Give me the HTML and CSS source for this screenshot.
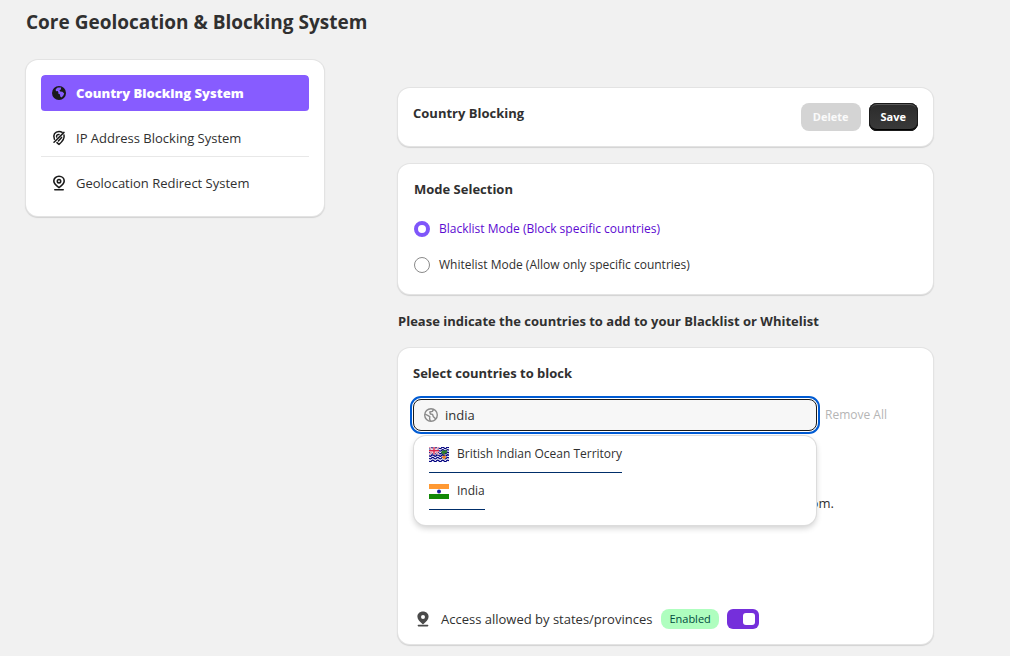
FILE: index.html
```html
<!DOCTYPE html>
<html lang="en">
<head>
    <meta charset="UTF-8">
    <meta name="viewport" content="width=device-width, initial-scale=1.0">
    <title>Core Geolocation &amp; Blocking System</title>
    <link rel="stylesheet" href="styles.css">
</head>
<body>
    <header>
        <h1>Core Geolocation &amp; Blocking System</h1>
    </header>
    <div class="layout">
        <nav class="card sidebar">
            <a class="nav-item active" href="#country">
                <svg class="icon" viewBox="0 0 16 16">
                    <circle cx="8" cy="8" r="7" fill="#1a1a1a"/>
                    <path d="M10.2 2.6 C8.8 2.4 7.6 2.4 6.2 2.8 L4.6 4.4 L5 6.2 L6.6 6 L7.4 7.2 L7.2 8.6 L9 9.4 L9.2 11.6 L10.6 12.4 L12.4 10.6 L13.2 8.4 L11.4 6.8 L9.2 6.6 L8.4 5.4 L9.8 4.4 Z" fill="#875cff"/>
                </svg>
                Country Blocking System
            </a>
            <a class="nav-item" href="#ip">
                <svg class="icon" viewBox="0 0 16 16" fill="none" stroke="#1a1a1a" stroke-width="1.5" stroke-linecap="round">
                    <path d="M3.4 9.2 C1.6 5 4 1.4 8 1.4 C9.2 1.4 10.4 1.8 11.2 2.4"/>
                    <path d="M13 5 C14 9 10.6 12.2 8 14.4 C7.2 13.8 6.6 13.2 6 12.6"/>
                    <path d="M3 12.2 L13 2.4"/>
                    <path d="M5.6 7 C5.4 5.4 6.4 4.4 8 4.4"/>
                    <path d="M7.4 11 L10.6 7.4"/>
                </svg>
                IP Address Blocking System
            </a>
            <a class="nav-item" href="#redirect">
                <svg class="icon" viewBox="0 0 16 16" fill="none" stroke="#1a1a1a" stroke-width="1.6" stroke-linecap="round">
                    <path d="M8 12.6 C5 10.4 2.8 8.6 2.8 6 C2.8 3.2 5.2 1.2 8 1.2 C10.8 1.2 13.2 3.2 13.2 6 C13.2 8.6 11 10.4 8 12.6 Z"/>
                    <circle cx="8" cy="6.2" r="1.7"/>
                    <path d="M3.8 14.8 H12.2"/>
                </svg>
                Geolocation Redirect System
            </a>
        </nav>

        <main>
            <section class="card title-card" id="country">
                <h2>Country Blocking</h2>
                <div class="actions">
                    <button class="btn" type="button" disabled>Delete</button>
                    <button class="btn btn-primary" type="button">Save</button>
                </div>
            </section>

            <section class="card mode-card">
                <h2>Mode Selection</h2>
                <label class="mode">
                    <input type="radio" name="mode" value="blacklist" checked>
                    <span>Blacklist Mode (Block specific countries)</span>
                </label>
                <label class="mode">
                    <input type="radio" name="mode" value="whitelist">
                    <span>Whitelist Mode (Allow only specific countries)</span>
                </label>
            </section>

            <h2 class="hint">Please indicate the countries to add to your Blacklist or Whitelist</h2>

            <section class="card select-card">
                <h2><label for="country-search">Select countries to block</label></h2>
                <div class="search-row">
                    <div class="search">
                        <div class="search-box">
                            <svg class="search-icon" viewBox="0 0 16 16" fill="none" stroke="#8a8a8a" stroke-width="1.4" stroke-linejoin="round">
                                <circle cx="8" cy="8" r="6.3"/>
                                <path d="M2 7 L4.6 8.4 L6.8 9.6 L6.6 12 L7.4 14"/>
                                <path d="M10.6 2.4 L9.4 4.4 L6.8 5 L7.4 7 L9.6 7.4 L10.2 9.4 L12.8 12"/>
                            </svg>
                            <input type="text" id="country-search" value="india" autocomplete="off">
                        </div>
                        <div class="dropdown">
                            <a class="option" href="#io">
                                <svg class="flag" viewBox="0 0 20 15">
                                    <rect width="20" height="15" fill="#fff"/>
                                    <path d="M0 8.5 q1.25 1.5 2.5 0 t2.5 0 t2.5 0 t2.5 0 t2.5 0 t2.5 0 t2.5 0 t2.5 0 M0 11.2 q1.25 1.5 2.5 0 t2.5 0 t2.5 0 t2.5 0 t2.5 0 t2.5 0 t2.5 0 t2.5 0 M0 13.9 q1.25 1.5 2.5 0 t2.5 0 t2.5 0 t2.5 0 t2.5 0 t2.5 0 t2.5 0 t2.5 0 M10 .8 q1.25 1.5 2.5 0 t2.5 0 t2.5 0 t2.5 0 M10 3.4 q1.25 1.5 2.5 0 t2.5 0 t2.5 0 t2.5 0 M10 6 q1.25 1.5 2.5 0 t2.5 0 t2.5 0 t2.5 0" fill="none" stroke="#000080" stroke-width="1.3"/>
                                    <rect width="10" height="7.5" fill="#2a2a86"/>
                                    <path d="M0 0 L10 7.5 M10 0 L0 7.5" stroke="#fff" stroke-width="1.6"/>
                                    <path d="M0 0 L10 7.5 M10 0 L0 7.5" stroke="#d8254a" stroke-width=".6"/>
                                    <path d="M5 0 V7.5 M0 3.75 H10" stroke="#fff" stroke-width="2.4"/>
                                    <path d="M5 0 V7.5 M0 3.75 H10" stroke="#d8254a" stroke-width="1.4"/>
                                    <path d="M15.2 5 V11" stroke="#8a6a28" stroke-width="1"/>
                                    <path d="M12 5.5 L13.5 3 L15.2 4 L17.4 2.5 L18.2 6 L16 6.5 L14 7.5 Z" fill="#2e7d32"/>
                                    <path d="M13.3 9 H17 V10.4 L15.2 12.4 L13.3 10.4 Z" fill="#ffa726"/>
                                    <path d="M14.2 10 H16.2" stroke="#d8254a" stroke-width=".9"/>
                                </svg>
                                British Indian Ocean Territory
                            </a>
                            <a class="option" href="#in">
                                <svg class="flag" viewBox="0 0 20 15">
                                    <rect width="20" height="15" fill="#fff"/>
                                    <rect width="20" height="5" fill="#ff9933"/>
                                    <rect y="10" width="20" height="5" fill="#128807"/>
                                    <circle cx="10" cy="7.5" r="2" fill="#1a1a9c"/>
                                </svg>
                                India
                            </a>
                        </div>
                    </div>
                    <button class="remove-all" type="button" disabled>Remove All</button>
                </div>
                <p class="empty-note">The countries you have selected appear at the bottom.</p>
                <div class="access-row">
                    <svg class="icon" viewBox="0 0 16 16">
                        <path fill-rule="evenodd" d="M8 .6 C4.8 .6 2.4 2.8 2.4 5.8 C2.4 8.8 5 11 8 13.4 C11 11 13.6 8.8 13.6 5.8 C13.6 2.8 11.2 .6 8 .6 Z M8 4 A2 2 0 1 1 8 8 A2 2 0 1 1 8 4 Z" fill="#4a4a4a"/>
                        <path d="M3.4 14.6 H12.6" stroke="#4a4a4a" stroke-width="1.6" stroke-linecap="round"/>
                    </svg>
                    <label for="states">Access allowed by states/provinces</label>
                    <span class="badge">Enabled</span>
                    <input class="switch" type="checkbox" id="states" checked>
                </div>
            </section>
        </main>
    </div>
</body>
</html>
```

FILE: styles.css
```css
* {
    box-sizing: border-box;
}
body {
    margin: 0;
    padding: 8px 77px 12px 26px;
    background: #f1f1f1;
    color: #303030;
    font-family: "Segoe UI", "Open Sans", "Noto Sans", sans-serif;
    font-size: 13px;
    line-height: 20px;
}
h1, h2, p {
    margin: 0;
}
h1 {
    font-size: 19px;
    line-height: 28px;
    font-weight: 700;
}
h2 {
    font-size: 13px;
    line-height: 20px;
    font-weight: 700;
}
a {
    color: inherit;
    text-decoration: none;
}
.layout {
    display: grid;
    grid-template-columns: 298px minmax(0, 1fr);
    column-gap: 74px;
    align-items: start;
    margin-top: 24px;
}
.card {
    background: #fff;
    border-radius: 12px;
    box-shadow: 0 0 0 1px #e3e3e3, 0 1px 1px 1px #d2d2d2;
}
.icon {
    flex: none;
    width: 16px;
    height: 16px;
}

/* Sidebar */
.sidebar {
    display: flex;
    flex-direction: column;
    gap: 8px;
    padding: 15px;
}
.nav-item {
    display: flex;
    align-items: center;
    gap: 9px;
    height: 37px;
    padding: 0 10px;
    border-bottom: 1px solid #e8e8e8;
}
.nav-item:last-child {
    height: 36px;
    border-bottom: none;
}
.nav-item.active {
    border-bottom-color: transparent;
    border-radius: 4px;
    background: #875cff;
    background-clip: padding-box;
    color: #fff;
    font-weight: 800;
}

/* Main column */
main {
    padding-top: 28px;
}
.title-card {
    display: flex;
    justify-content: space-between;
    padding: 15px;
    margin-bottom: 18px;
}
.actions {
    display: flex;
    gap: 8px;
}
.btn {
    height: 28px;
    padding: 0 12px;
    border: none;
    border-radius: 8px;
    background: #d4d4d4;
    color: #fafafa;
    font: inherit;
    font-size: 11px;
    font-weight: 700;
}
.btn-primary {
    background: linear-gradient(#2b2b2b, #3a3a3a);
    color: #fff;
    box-shadow: inset 0 0 0 1px #1a1a1a, inset 0 2px 0 #5a5a5a, inset 0 -2px 0 #000;
}
.mode-card {
    padding: 15px 16px 19px;
}
.mode-card h2 {
    margin-bottom: 20px;
}
.mode {
    display: flex;
    align-items: center;
    gap: 9px;
    font-size: 12px;
}
.mode + .mode {
    margin-top: 16px;
}
.mode input {
    appearance: none;
    width: 16px;
    height: 16px;
    margin: 0;
    border: 1px solid #8a8a8a;
    border-radius: 50%;
    background: #fff;
}
.mode input:checked {
    border: 4px solid #7f56fa;
}
.mode input:checked + span {
    color: #5c0ad1;
}
.hint {
    margin: 17px 0;
}

/* Country picker */
.select-card {
    padding: 15px;
}
.search-row {
    display: flex;
    align-items: center;
    gap: 8px;
    margin-top: 16px;
}
.search {
    position: relative;
    flex: 1;
}
.search-box {
    display: flex;
    align-items: center;
    gap: 6px;
    height: 32px;
    padding: 0 9px;
    border: 1px solid #1a1a1a;
    border-radius: 8px;
    background: #f7f7f7;
    outline: 2px solid #005bd3;
    outline-offset: 1px;
}
.search-icon {
    width: 16px;
    height: 16px;
}
.search-box input {
    flex: 1;
    min-width: 0;
    padding: 0;
    border: none;
    outline: none;
    background: none;
    color: #303030;
    font: inherit;
}
.remove-all {
    width: 64px;
    margin-right: 29px;
    padding: 0;
    border: none;
    background: none;
    color: #b5b5b5;
    font: inherit;
    font-size: 12px;
    text-align: left;
}
.dropdown {
    position: absolute;
    top: 37px;
    left: 1px;
    right: 1px;
    display: flex;
    flex-direction: column;
    align-items: flex-start;
    padding: 0 15px 15px;
    border-radius: 12px;
    background: #fff;
    box-shadow: 0 0 0 1px #dcdcdc, 0 3px 6px rgba(0, 0, 0, 0.2);
}
.option {
    display: flex;
    align-items: center;
    gap: 8px;
    height: 37px;
    border-bottom: 1px solid #002e6a;
    font-size: 12px;
}
.flag {
    width: 20px;
    height: 15px;
}
.empty-note {
    margin-top: 62px;
    padding-left: 6px;
    text-align: center;
}
.access-row {
    display: flex;
    align-items: center;
    margin-top: 96px;
}
.access-row label {
    margin: 0 9px 0 10px;
}
.access-row .icon {
    margin-left: 2px;
}
.badge {
    padding: 0 8px;
    border-radius: 8px;
    background: #affebf;
    color: #014b40;
    font-size: 11px;
}
.switch {
    appearance: none;
    display: flex;
    justify-content: flex-end;
    width: 32px;
    height: 20px;
    margin: 0 0 0 8px;
    padding: 4px;
    border-radius: 6px;
    background: #752fdb;
}
.switch::before {
    content: "";
    width: 12px;
    border-radius: 3px;
    background: #fff;
}
.switch:not(:checked) {
    justify-content: flex-start;
    background: #8a8a8a;
}
```
